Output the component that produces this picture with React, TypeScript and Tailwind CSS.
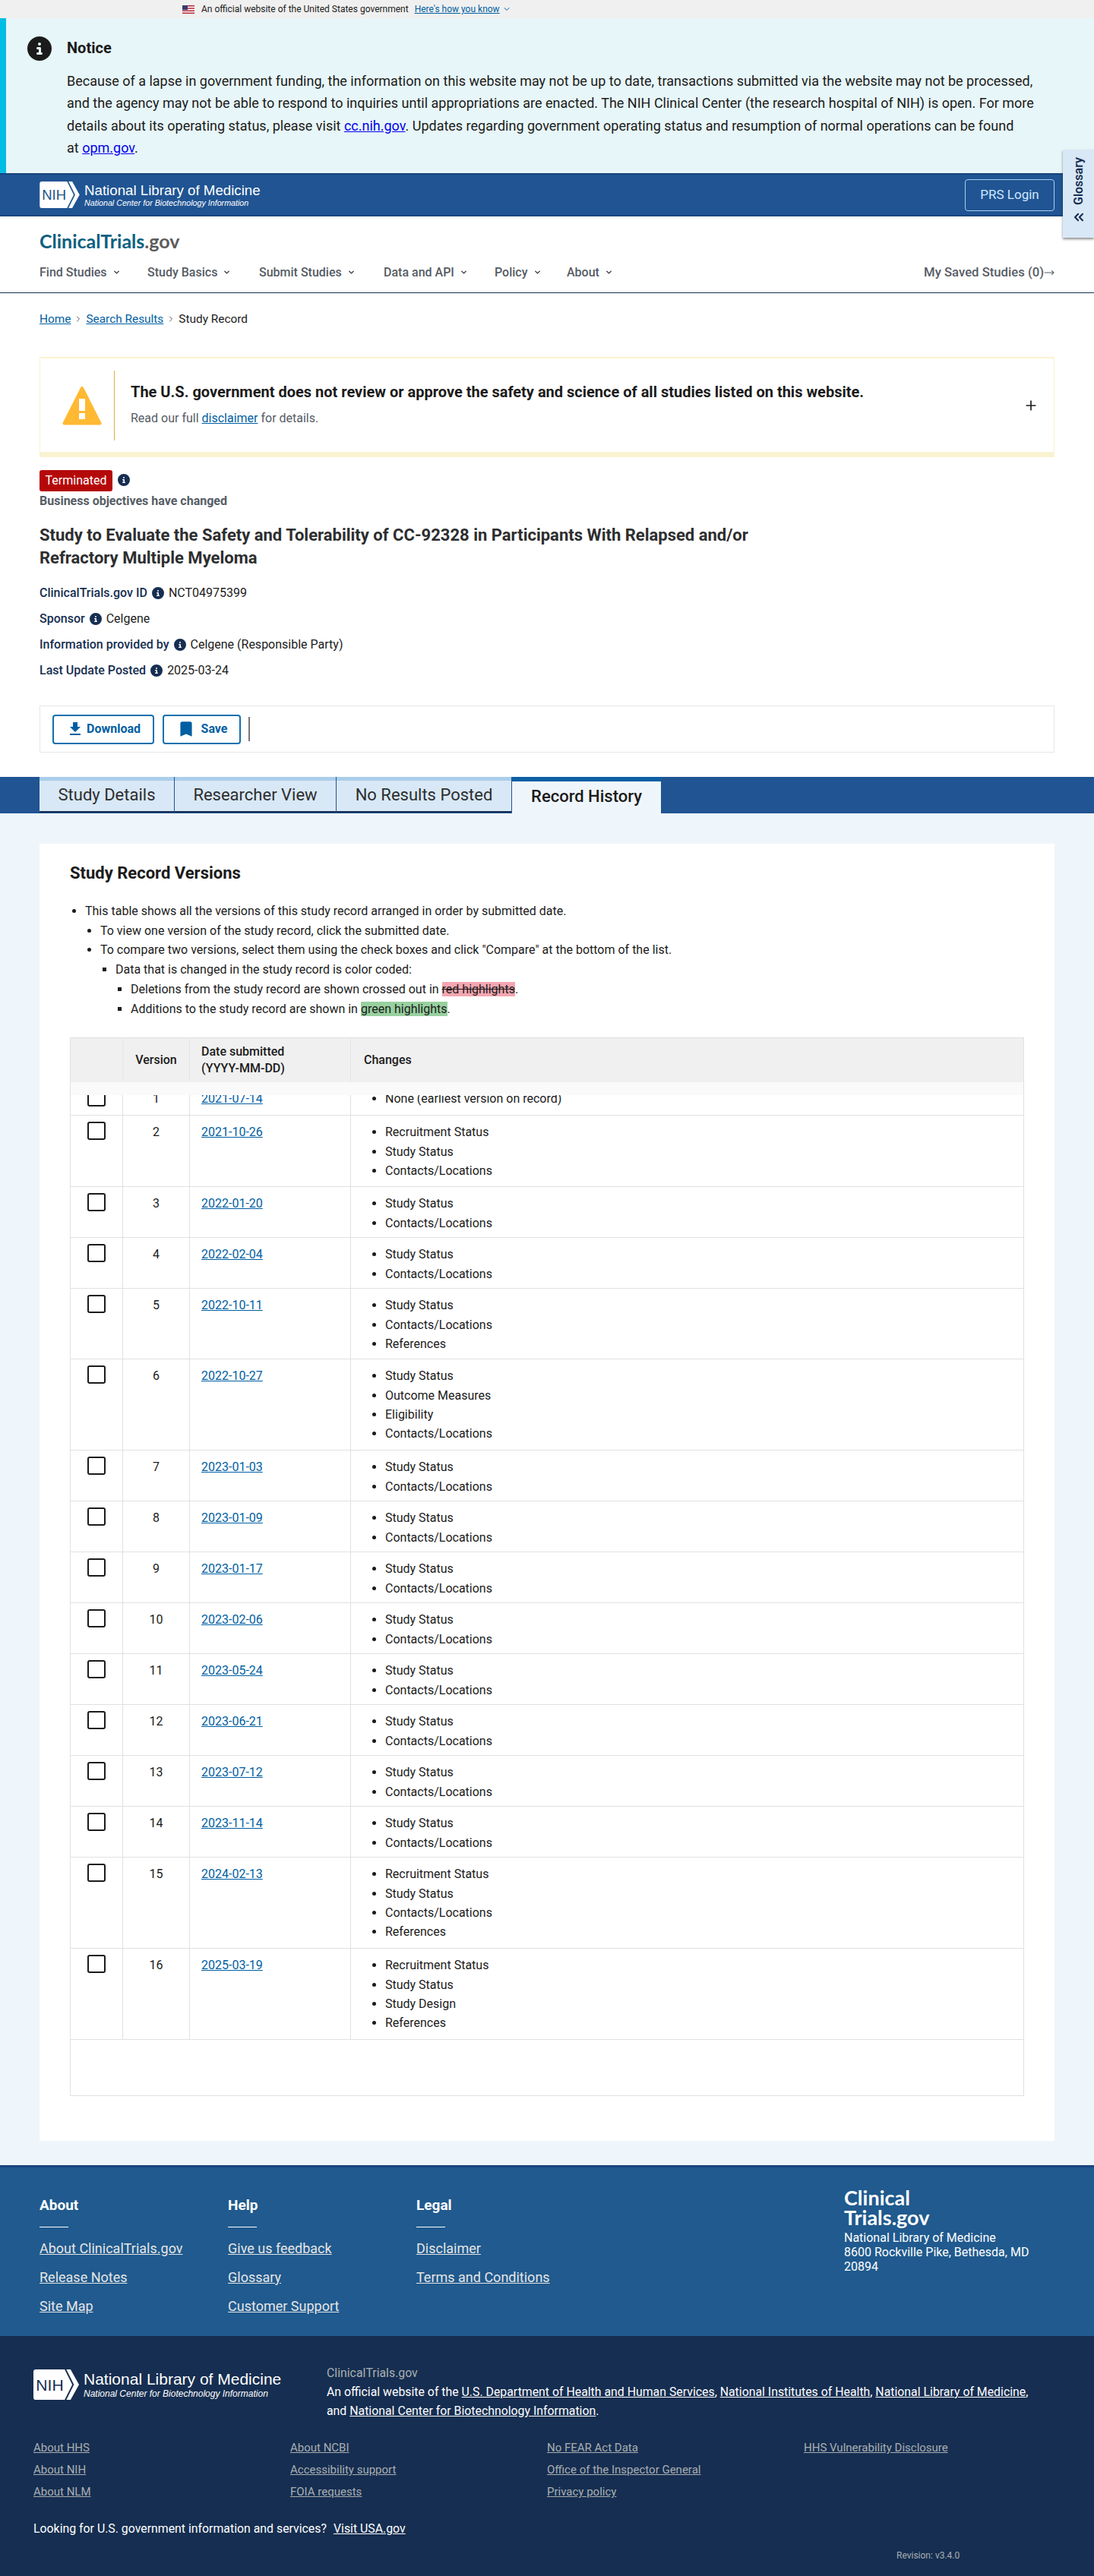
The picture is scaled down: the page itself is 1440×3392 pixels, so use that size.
import { ChevronDown, ChevronRight, ChevronsLeft, MoveRight, Plus } from 'lucide-react';
import { FaCircleInfo } from 'react-icons/fa6';
import { MdBookmark, MdFileDownload } from 'react-icons/md';

const versions: { v: number; date: string; changes: string[] }[] = [
  { v: 2, date: '2021-10-26', changes: ['Recruitment Status', 'Study Status', 'Contacts/Locations'] },
  { v: 3, date: '2022-01-20', changes: ['Study Status', 'Contacts/Locations'] },
  { v: 4, date: '2022-02-04', changes: ['Study Status', 'Contacts/Locations'] },
  { v: 5, date: '2022-10-11', changes: ['Study Status', 'Contacts/Locations', 'References'] },
  { v: 6, date: '2022-10-27', changes: ['Study Status', 'Outcome Measures', 'Eligibility', 'Contacts/Locations'] },
  { v: 7, date: '2023-01-03', changes: ['Study Status', 'Contacts/Locations'] },
  { v: 8, date: '2023-01-09', changes: ['Study Status', 'Contacts/Locations'] },
  { v: 9, date: '2023-01-17', changes: ['Study Status', 'Contacts/Locations'] },
  { v: 10, date: '2023-02-06', changes: ['Study Status', 'Contacts/Locations'] },
  { v: 11, date: '2023-05-24', changes: ['Study Status', 'Contacts/Locations'] },
  { v: 12, date: '2023-06-21', changes: ['Study Status', 'Contacts/Locations'] },
  { v: 13, date: '2023-07-12', changes: ['Study Status', 'Contacts/Locations'] },
  { v: 14, date: '2023-11-14', changes: ['Study Status', 'Contacts/Locations'] },
  { v: 15, date: '2024-02-13', changes: ['Recruitment Status', 'Study Status', 'Contacts/Locations', 'References'] },
  { v: 16, date: '2025-03-19', changes: ['Recruitment Status', 'Study Status', 'Study Design', 'References'] },
];

const rowHeight: Record<number, string> = { 1: 'h-[43px]', 2: 'h-[67px]', 3: 'h-[93px]', 4: 'h-[120px]' };

function NihLogo({ big }: { big?: boolean }) {
  return (
    <div className="flex items-center">
      <svg viewBox="0 0 54 36" className={big ? 'w-[60px] h-[40px]' : 'w-[53px] h-[35px]'}>
        <path d="M3 0H37L46 18L37 36H3A3 3 0 0 1 0 33V3A3 3 0 0 1 3 0Z" fill="#fff" />
        <path d="M39 0H44L54 18L44 36H39L48 18Z" fill="#fff" />
        <text x="3" y="25" fontFamily="Liberation Sans, sans-serif" fontSize="19" fill={big ? '#162e51' : '#20558a'}>NIH</text>
      </svg>
      <div className="ml-[6px] text-white">
        <div className={big ? "font-['Liberation_Sans',sans-serif] text-[21px] leading-[24px] whitespace-nowrap" : "font-['Liberation_Sans',sans-serif] text-[18.7px] leading-[21px] whitespace-nowrap"}>National Library of Medicine</div>
        <div className={big ? "font-['Liberation_Sans',sans-serif] text-[12px] leading-[14px] italic whitespace-nowrap" : "font-['Liberation_Sans',sans-serif] text-[10.7px] leading-[12px] italic whitespace-nowrap"}>National Center for Biotechnology Information</div>
      </div>
    </div>
  );
}

function Info({ className }: { className?: string }) {
  return <FaCircleInfo className={className ?? 'w-4 h-4 text-[#162e51]'} />;
}

function NavItem({ label, width }: { label: string; width: string }) {
  return (
    <span className={`${width} flex items-center gap-[7px] text-[16px] font-medium text-[#565c65] whitespace-nowrap`}>
      {label}
      <ChevronDown className="w-[11px] h-[11px] text-[#333]" strokeWidth={3} />
    </span>
  );
}

function Meta({ label, value }: { label: string; value: string }) {
  return (
    <div className="h-[34px] flex items-center gap-[6px] text-[16px]">
      <span className="font-medium text-[#162e51]">{label}</span>
      <Info />
      <span className="text-[#1b1b1b]">{value}</span>
    </div>
  );
}

function Tab({ label, active, width }: { label: string; active?: boolean; width: string }) {
  return active ? (
    <div className={`${width} h-[48px] bg-[#eff6fb] border-t-[6px] border-t-[#0b5fa5] pt-[1px] text-center text-[22px] leading-[38px] font-medium text-[#1b1b1b]`}>{label}</div>
  ) : (
    <div className={`${width} h-[47px] bg-[#d9e8f6] border-t-[5px] border-t-[#aacde9] border-b-2 border-b-[#162e51] text-center text-[22px] leading-[38px] text-[#2d2e2f]`}>{label}</div>
  );
}

function Cell({ v, date, changes }: { v: number; date: string; changes: string[] }) {
  return (
    <div className={`${rowHeight[changes.length]} grid grid-cols-[69px_88px_212px_1fr] border-t border-[#dfe1e2] first:border-t-0 text-[16px] text-[#1b1b1b]`}>
      <div className="border-r border-[#dfe1e2] pt-2 pl-[22px]">
        <div className="w-6 h-6 rounded-[3px] border-2 border-[#1b1b1b] bg-white" />
      </div>
      <div className="border-r border-[#dfe1e2] pt-[9px] text-center leading-[25px]">{v}</div>
      <div className="border-r border-[#dfe1e2] pt-[9px] pl-[15px] leading-[25px]">
        <span className="underline text-[#005ea2]">{date}</span>
      </div>
      <ul className="list-disc pl-[45px] pt-[9px] leading-[25.3px]">
        {changes.map((c) => <li key={c}>{c}</li>)}
      </ul>
    </div>
  );
}

function FooterCol({ title, links, width }: { title: string; links: string[]; width: string }) {
  return (
    <div className={width}>
      <div className="text-[19px] font-bold leading-[26px] text-white">{title}</div>
      <div className="mt-[15px] w-[38px] border-t border-white" />
      <div className="mt-[15px] flex flex-col gap-[12px]">
        {links.map((l) => <span key={l} className="underline text-[18px] leading-[26px] text-[#e6e6e6]">{l}</span>)}
      </div>
    </div>
  );
}

function SubCol({ links }: { links: string[] }) {
  return (
    <div className="w-[342px] flex flex-col gap-[9px]">
      {links.map((l) => <span key={l} className="underline text-[15px] leading-[20px] text-[#a9aeb1]">{l}</span>)}
    </div>
  );
}

export default function App() {
  return (
    <div className="relative font-[Roboto,sans-serif] bg-white w-[1440px]">
      {/* Gov banner */}
      <div className="h-[24px] bg-[#f0f0f0] flex items-center pl-[240px] text-[12px] text-[#1b1b1b]">
        <svg viewBox="0 0 16 11" className="w-4 h-[11px] mr-[9px]">
          <rect width="16" height="11" fill="#fff" />
          <path d="M0 0H16V1.6H0ZM0 3.2H16V4.8H0ZM0 6.4H16V8H0ZM0 9.5H16V11H0Z" fill="#b22234" />
          <rect width="7" height="6" fill="#3c3b6e" />
        </svg>
        <span>An official website of the United States government</span>
        <span className="ml-[8px] underline text-[#005ea2]">Here's how you know</span>
        <ChevronDown className="ml-[3px] w-3 h-3 text-[#005ea2]" />
      </div>

      {/* Notice */}
      <div className="h-[204px] bg-[#e7f6f8] border-l-[8px] border-[#00bde3] pl-[28px] pt-[24px] flex gap-[20px]">
        <FaCircleInfo className="w-8 h-8 text-[#1b1b1b] shrink-0" />
        <div className="w-[1276px]">
          <div className="text-[20px] font-bold leading-[30px] text-[#1b1b1b]">Notice</div>
          <p className="mt-[14px] text-[18px] leading-[29.4px] text-[#1b1b1b]">
            Because of a lapse in government funding, the information on this website may not be up to date, transactions submitted via the website may not be processed, and the agency may not be able to respond to inquiries until appropriations are enacted. The NIH Clinical Center (the research hospital of NIH) is open. For more details about its operating status, please visit <span className="underline text-[#0000ee]">cc.nih.gov</span>. Updates regarding government operating status and resumption of normal operations can be found at&nbsp;<span className="underline text-[#0000ee]">opm.gov</span>.
          </p>
        </div>
      </div>

      {/* NLM bar */}
      <div className="h-[57px] bg-[#205493] border-y-2 border-[#1a4480] px-[52px] flex items-center justify-between">
        <NihLogo />
        <div className="w-[118px] h-[42px] rounded border border-[#a9d0f0] text-[#cfe8ff] text-[17px] flex items-center justify-center">PRS Login</div>
      </div>

      {/* Glossary tab */}
      <div className="absolute right-0 top-[197px] w-[41px] h-[116px] bg-[#d9e8f6] shadow-[0_2px_3px_rgba(0,0,0,0.45)] flex flex-col items-center pt-[10px] text-[#162e51]">
        <span className="[writing-mode:vertical-rl] rotate-180 text-[16px] font-semibold leading-[20px]">Glossary</span>
        <ChevronsLeft className="mt-[6px] w-5 h-5" strokeWidth={2.5} />
      </div>

      {/* Site header */}
      <div className="h-[101px] px-[52px] border-b border-[#162e51]">
        <div className="pt-[17px] text-[25px] leading-[30px] font-['Lato',sans-serif] font-bold">
          <span className="text-[#0b6080]">ClinicalTrials</span><span className="text-[#5c5c5c]">.gov</span>
        </div>
        <div className="mt-[14px] flex items-center">
          <NavItem label="Find Studies" width="w-[142px]" />
          <NavItem label="Study Basics" width="w-[147px]" />
          <NavItem label="Submit Studies" width="w-[164px]" />
          <NavItem label="Data and API" width="w-[146px]" />
          <NavItem label="Policy" width="w-[95px]" />
          <NavItem label="About" width="w-[100px]" />
          <span className="ml-auto flex items-center text-[16.7px] font-medium text-[#565c65]">
            My Saved Studies (0)<MoveRight className="w-[14px] h-[14px]" />
          </span>
        </div>
      </div>

      {/* Breadcrumb */}
      <div className="px-[52px] pt-[24px] h-[84px] flex items-start gap-[4px] text-[15.4px] leading-[20px] text-[#1b1b1b]">
        <span className="underline text-[#005ea2]">Home</span>
        <ChevronRight className="w-3 h-3 mt-1 text-[#555]" />
        <span className="underline text-[#005ea2]">Search Results</span>
        <ChevronRight className="w-3 h-3 mt-1 text-[#555]" />
        <span>Study Record</span>
      </div>

      {/* Disclaimer */}
      <div className="mx-[52px] h-[132px] border-x border-t-2 border-[#faf3d1] border-b-[7px] flex items-center">
        <svg viewBox="0 0 52 52" className="ml-[29px] w-[52px] h-[52px] shrink-0">
          <path d="M26 3L49.5 49.5H2.5Z" fill="#ffb933" stroke="#ffb933" strokeWidth="4" strokeLinejoin="round" />
          <path d="M22 17H30V33H22ZM22 36H30V44H22Z" fill="#fff" />
        </svg>
        <div className="ml-[16px] h-[92px] border-l border-[#e0b040]" />
        <div className="ml-[21px] flex-1 -mt-[2px]">
          <div className="text-[20px] font-bold leading-[26px] text-[#1b1b1b]">The U.S. government does not review or approve the safety and science of all studies listed on this website.</div>
          <div className="mt-[11px] text-[16px] leading-[22px] text-[#565c65]">Read our full <span className="underline text-[#005ea2]">disclaimer</span> for details.</div>
        </div>
        <Plus className="mr-[20px] w-[20px] h-[20px] text-[#1b1b1b]" />
      </div>

      {/* Study header */}
      <div className="px-[52px] pt-[17px]">
        <div className="flex items-center gap-[7px] h-[28px]">
          <span className="w-[96px] h-[28px] rounded-[3px] bg-[#b50909] text-white text-[16px] leading-[28px] text-center">Terminated</span>
          <Info className="w-4 h-4 text-[#162e51] -mt-[3px]" />
        </div>
        <div className="mt-[2px] text-[16px] font-bold leading-[22px] text-[#565c65]">Business objectives have changed</div>
        <h1 className="mt-[19px] w-[960px] text-[22px] font-bold leading-[30px] text-[#2d2e2f]">Study to Evaluate the Safety and Tolerability of CC-92328 in Participants With Relapsed and/or Refractory Multiple Myeloma</h1>
        <div className="mt-[14px]">
          <Meta label="ClinicalTrials.gov ID" value="NCT04975399" />
          <Meta label="Sponsor" value="Celgene" />
          <Meta label="Information provided by" value="Celgene (Responsible Party)" />
          <Meta label="Last Update Posted" value="2025-03-24" />
        </div>
        <div className="mt-[29px] h-[62px] border border-[#e6e6e6] flex items-center pl-[16px]">
          <span className="w-[134px] h-[39px] rounded-[4px] border-2 border-[#1470ad] flex items-center justify-center gap-[3px] text-[16px] font-bold text-[#005ea2]">
            <MdFileDownload className="w-[24px] h-[24px]" />Download
          </span>
          <span className="ml-[11px] w-[103px] h-[39px] rounded-[4px] border-2 border-[#1470ad] flex items-center justify-center gap-[7px] text-[16px] font-bold text-[#005ea2]">
            <MdBookmark className="w-[26px] h-[26px]" />Save
          </span>
          <span className="ml-[10px] h-[32px] border-l-2 border-[#777]" />
        </div>
      </div>

      {/* Tabs */}
      <div className="mt-[32px] h-[48px] bg-[#205493] px-[52px] flex items-start gap-[1px]">
        <Tab label="Study Details" width="w-[177px]" />
        <Tab label="Researcher View" width="w-[212px]" />
        <Tab label="No Results Posted" width="w-[230px]" />
        <Tab label="Record History" width="w-[196px]" active />
      </div>

      {/* Main */}
      <div className="bg-[#eff6fb] px-[52px] pt-[40px] pb-[32px]">
        <div className="bg-white h-[1708px] px-[40px] pt-[24px]">
          <h2 className="text-[22px] font-bold leading-[30px] text-[#1b1b1b]">Study Record Versions</h2>
          <ul className="mt-[22px] list-disc pl-[20px] text-[16px] leading-[25.7px] text-[#1b1b1b]">
            <li>This table shows all the versions of this study record arranged in order by submitted date.</li>
            <ul className="list-disc pl-[20px]">
              <li>To view one version of the study record, click the submitted date.</li>
              <li>To compare two versions, select them using the check boxes and click "Compare" at the bottom of the list.</li>
              <ul className="list-[square] pl-[20px]">
                <li>Data that is changed in the study record is color coded:</li>
                <ul className="list-[square] pl-[20px]">
                  <li>Deletions from the study record are shown crossed out in <span className="bg-[#f4a6b1] line-through">red highlights</span>.</li>
                  <li>Additions to the study record are shown in <span className="bg-[#98d09f]">green highlights</span>.</li>
                </ul>
              </ul>
            </ul>
          </ul>

          {/* Versions table */}
          <div className="mt-[25px] border border-[#dfe1e2]">
            <div className="h-[58px] bg-[#f0f0f0] grid grid-cols-[69px_88px_212px_1fr] items-stretch text-[16px] font-medium leading-[22px] text-[#1b1b1b]">
              <div className="border-r border-[#e6e6e6]" />
              <div className="border-r border-[#e6e6e6] flex items-center justify-center">Version</div>
              <div className="border-r border-[#e6e6e6] flex flex-col justify-center pl-[15px]"><span>Date submitted</span><span>(YYYY-MM-DD)</span></div>
              <div className="flex items-center pl-[17px]">Changes</div>
            </div>
            <div className="relative">
              <Cell v={1} date="2021-07-14" changes={['None (earliest version on record)']} />
              <div className="absolute top-0 left-0 right-0 h-[17px] bg-[#fafafa]" />
              <div className="border-t border-[#dfe1e2]">
                {versions.map((r) => <Cell key={r.v} {...r} />)}
              </div>
            </div>
            <div className="h-[74px] border-t border-[#dfe1e2]" />
          </div>
        </div>
      </div>

      {/* Footer top */}
      <div className="h-[225px] bg-[#205a8e] border-t-[3px] border-[#1a4480] px-[52px] pt-[37px] flex">
        <FooterCol title="About" links={['About ClinicalTrials.gov', 'Release Notes', 'Site Map']} width="w-[248px]" />
        <FooterCol title="Help" links={['Give us feedback', 'Glossary', 'Customer Support']} width="w-[248px]" />
        <FooterCol title="Legal" links={['Disclaimer', 'Terms and Conditions']} width="w-[563px]" />
        <div className="-mt-[10px] w-[262px] text-white">
          <div className="text-[27px] leading-[26px] font-['Lato',sans-serif] font-bold">Clinical<br />Trials.gov</div>
          <div className="mt-[4px] text-[16px] leading-[19px]">National Library of Medicine<br />8600 Rockville Pike, Bethesda, MD 20894</div>
        </div>
      </div>

      {/* Footer bottom */}
      <div className="h-[317px] bg-[#162e51] px-[44px] pt-[36px]">
        <div className="flex">
          <div className="w-[386px] pt-[8px]"><NihLogo big /></div>
          <div className="text-[15.85px] leading-[25px] text-white w-[945px]">
            <div className="text-[#a9aeb1]">ClinicalTrials.gov</div>
            An official website of the <span className="underline">U.S. Department of Health and Human Services</span>, <span className="underline">National Institutes of Health</span>, <span className="underline">National Library of Medicine</span>, and <span className="underline">National Center for Biotechnology Information</span>.
          </div>
        </div>
        <div className="mt-[26px] flex">
          <SubCol links={['About HHS', 'About NIH', 'About NLM']} />
          <SubCol links={['About NCBI', 'Accessibility support', 'FOIA requests']} />
          <SubCol links={['No FEAR Act Data', 'Office of the Inspector General', 'Privacy policy']} />
          <SubCol links={['HHS Vulnerability Disclosure']} />
        </div>
        <div className="mt-[27px] text-[15.85px] leading-[24px] text-white">
          Looking for U.S. government information and services?<span className="ml-[9px] underline">Visit USA.gov</span>
        </div>
        <div className="mt-[14px] pl-[1136px] text-[12px] text-[#a9aeb1]">Revision: v3.4.0</div>
      </div>
    </div>
  );
}
